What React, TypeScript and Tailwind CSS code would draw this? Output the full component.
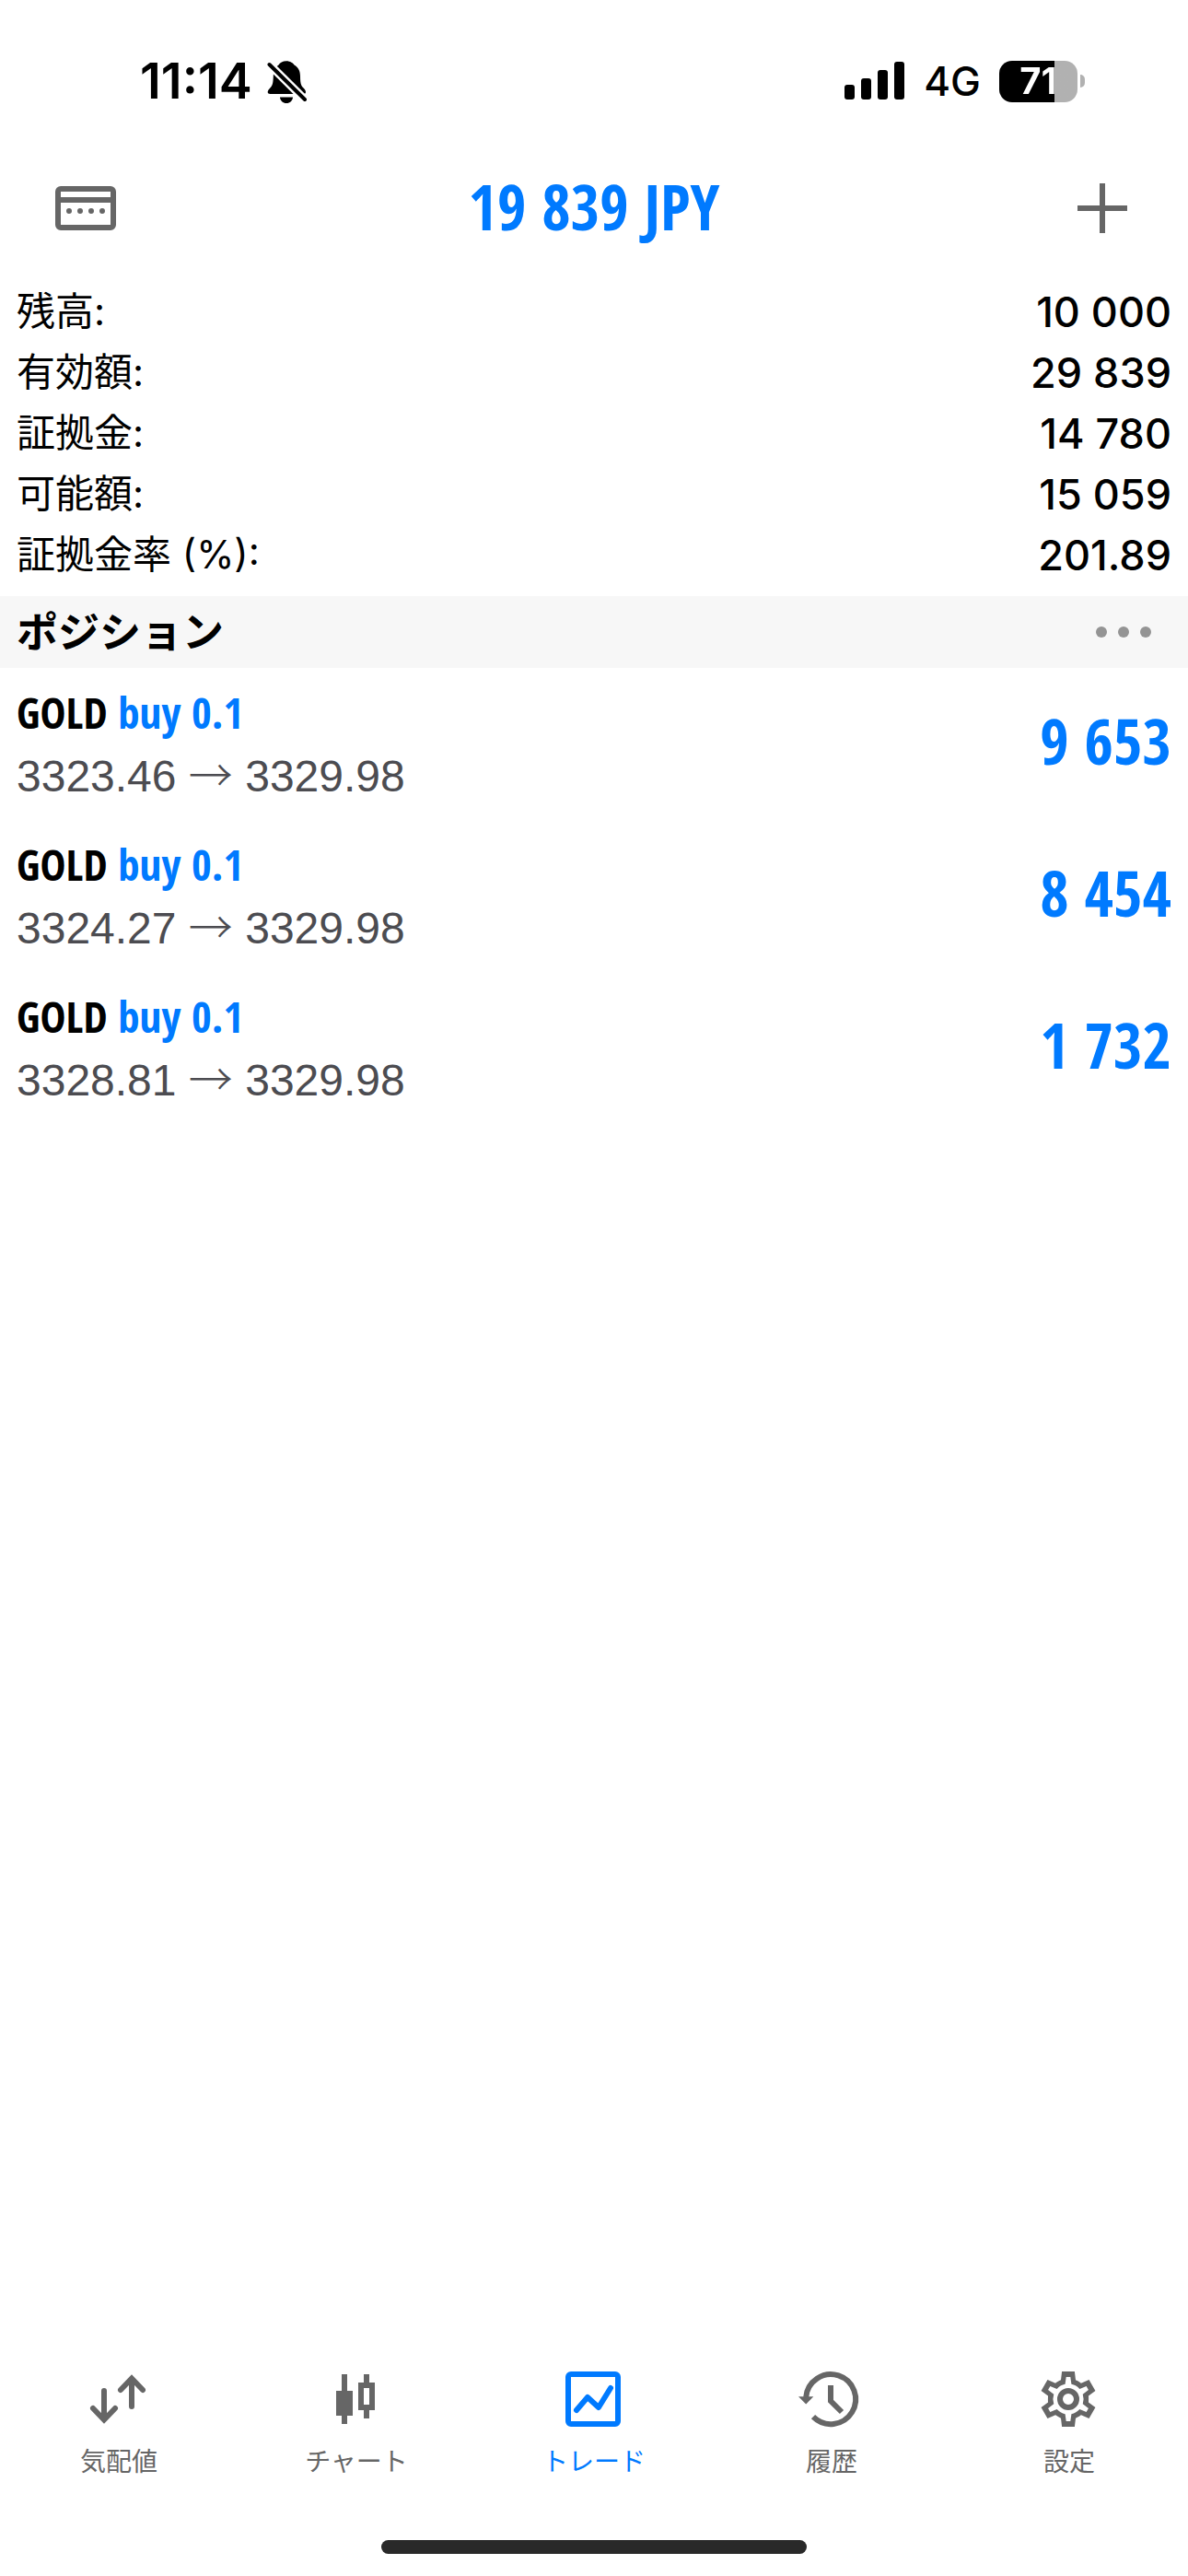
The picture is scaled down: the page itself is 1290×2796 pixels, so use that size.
import type { ReactNode } from "react"
import clsx from "clsx"

const account = [
  { label: "残高:", value: "10 000" },
  { label: "有効額:", value: "29 839" },
  { label: "証拠金:", value: "14 780" },
  { label: "可能額:", value: "15 059" },
  { label: "証拠金率 (%):", value: "201.89" },
]

const positions = [
  { symbol: "GOLD", side: "buy 0.1", open: "3323.46", current: "3329.98", profit: "9 653" },
  { symbol: "GOLD", side: "buy 0.1", open: "3324.27", current: "3329.98", profit: "8 454" },
  { symbol: "GOLD", side: "buy 0.1", open: "3328.81", current: "3329.98", profit: "1 732" },
]

// one gear tooth, repeated six times around the centre
function rotate(x: number, y: number, step: number) {
  const a = (step * Math.PI) / 3
  const rx = x * Math.cos(a) - y * Math.sin(a) + 35
  const ry = x * Math.sin(a) + y * Math.cos(a) + 36
  return `${rx.toFixed(2)} ${ry.toFixed(2)}`
}

const steps = [0, 1, 2, 3, 4, 5]

const gearPath =
  steps
    .map((s) => `${s ? "L" : "M"}${rotate(-8, -20.7, s)}L${rotate(-6.9, -30, s)}L${rotate(6.9, -30, s)}L${rotate(8, -20.7, s)}Q${rotate(9.5, -20.2, s)} ${rotate(13.9, -17.3, s)}`)
    .join("") +
  "Z" +
  steps
    .map((s) => `${s ? "A16.5 16.5 0 0 1 " : "M"}${rotate(-3.4, -16.2, s)}L${rotate(-2.3, -24, s)}L${rotate(2.3, -24, s)}L${rotate(3.4, -16.2, s)}`)
    .join("") +
  `A16.5 16.5 0 0 1 ${rotate(-3.4, -16.2, 0)}Z`

function TabIcon({ children }: { children: ReactNode }) {
  return (
    <svg viewBox="0 0 72 72" className="h-18 w-18" fill="none" stroke="currentColor" strokeWidth="6" aria-hidden="true">
      {children}
    </svg>
  )
}

const tabs = [
  {
    label: "気配値",
    icon: (
      <TabIcon>
        <path d="M20 27V58M8 46L20 58.5L32 46M50 44V14M38 26L50 13.5L62 26" strokeLinecap="round" />
      </TabIcon>
    ),
  },
  {
    label: "チャート",
    icon: (
      <TabIcon>
        <path
          d="M20 9h6v18h6v27h-6v9h-6v-9h-6V27h6zM44 9h6v9h6v30h-6v9h-6v-9h-6V18h6zM44 24v18h6V24z"
          fill="currentColor"
          fillRule="evenodd"
          stroke="none"
        />
      </TabIcon>
    ),
  },
  {
    label: "トレード",
    active: true,
    icon: (
      <TabIcon>
        <rect x="8" y="9" width="54" height="54" rx="3" />
        <path d="M17 48L29 34L41 45L54 24" strokeLinecap="round" strokeLinejoin="round" />
      </TabIcon>
    ),
  },
  {
    label: "履歴",
    icon: (
      <TabIcon>
        <path d="M8.2 34A27 27 0 1 1 16 55.2M35 21V38L47 50" />
        <path d="M0 33.3H16.3L8.2 41.5Z" fill="currentColor" stroke="none" />
      </TabIcon>
    ),
  },
  {
    label: "設定",
    icon: (
      <TabIcon>
        <path d={gearPath} fill="currentColor" fillRule="evenodd" stroke="none" />
        <circle cx="35" cy="36" r="9" />
      </TabIcon>
    ),
  },
]

function StatusBar() {
  return (
    <div className="flex h-44 items-center justify-between pr-28 pl-38 font-[Inter,sans-serif]">
      <div className="flex items-center gap-4">
        <span className="text-[54px] leading-none font-semibold">11:14</span>
        <svg viewBox="0 0 44 50" className="h-[50px] w-11" aria-label="消音">
          <path
            d="M21 3.3C25 3.3 28.5 5.6 29.5 7.5C34 10 36 14 36 20C36 29 37.5 30.5 40 33C42.5 35.5 43 39 39.5 39H3.5C0 39 .2 36 2 34C6 30 6.5 28 6.8 20C7 14 9 10 12.5 7.5C14 5 17 3.3 21 3.3Z"
            fill="black"
          />
          <path d="M14 42.5H28C27.5 46.5 25 49 21 49S14.5 46.5 14 42.5Z" fill="black" />
          <path d="M2.5 7L41 45" stroke="white" strokeWidth="9" />
          <path d="M2.5 7L41 45" stroke="black" strokeWidth="4" strokeLinecap="round" />
        </svg>
      </div>
      <div className="flex items-center gap-5">
        <svg viewBox="0 0 66 42" className="h-[42px] w-[66px]" aria-label="電波強度">
          <rect x="0" y="25" width="11" height="16" rx="3" />
          <rect x="18" y="18" width="11" height="23" rx="3" />
          <rect x="36" y="9" width="11" height="32" rx="3" />
          <rect x="54" y="0" width="11" height="41" rx="3" />
        </svg>
        <span className="text-[44px] leading-none font-medium">4G</span>
        <div className="flex items-center gap-[3px]">
          <div className="flex h-[45px] w-[85px] items-center justify-center rounded-[14px] bg-linear-to-r from-black from-71% to-[#b1b1b1] to-71% text-[40px] leading-none font-bold text-white">
            <span className="bg-linear-to-r from-white from-90% to-[#b1b1b1] to-90% bg-clip-text text-transparent">
              71
            </span>
          </div>
          <div className="h-3.5 w-[5px] rounded-r-full bg-[#b1b1b1]" />
        </div>
      </div>
    </div>
  )
}

function Header() {
  return (
    <header className="flex h-[100px] items-center justify-between px-[60px] text-[#666666]">
      <button type="button" aria-label="口座">
        <svg viewBox="0 0 66 48" className="h-12 w-[66px]" fill="none" stroke="currentColor" strokeWidth="6">
          <rect x="3" y="3" width="60" height="42" rx="3" />
          <path d="M3 15H63" />
          <path d="M15 27h0M27 27h0M39 27h0M51 27h0" strokeLinecap="round" />
        </svg>
      </button>
      <h1 className="pb-1 font-['Open_Sans_Condensed','Roboto_Condensed',sans-serif] text-[68px] leading-none font-bold text-[#007aff]">
        19 839 JPY
      </h1>
      <button type="button" aria-label="新規注文" className="flex w-[66px] justify-center">
        <svg viewBox="0 0 54 54" className="h-[54px] w-[54px]" stroke="currentColor" strokeWidth="6">
          <path d="M27 0V54M0 27H54" />
        </svg>
      </button>
    </header>
  )
}

export default function App() {
  return (
    <div className="flex min-h-screen flex-col bg-white font-[Inter,'Noto_Sans_CJK_JP',sans-serif] text-black" lang="ja">
      <StatusBar />
      <Header />

      <main className="flex-1 pt-[29px]">
        <dl className="px-[18px] pb-3">
          {account.map((row) => (
            <div key={row.label} className="flex h-[66px] items-center justify-between">
              <dt className="text-[42px] leading-none">{row.label}</dt>
              <dd className="text-[45px] leading-none font-medium">{row.value}</dd>
            </div>
          ))}
        </dl>

        <section>
          <div className="flex h-[78px] items-center justify-between bg-[#f7f7f7] pr-10 pl-[18px]">
            <h2 className="text-[45px] leading-none font-bold">ポジション</h2>
            <button type="button" aria-label="メニュー" className="flex gap-3">
              <span className="size-3 rounded-full bg-[#949494]" />
              <span className="size-3 rounded-full bg-[#949494]" />
              <span className="size-3 rounded-full bg-[#949494]" />
            </button>
          </div>
          <ul>
            {positions.map((p) => (
              <li key={p.open} className="flex h-[165px] items-center justify-between px-[18px]">
                <div>
                  <p className="font-['Open_Sans_Condensed','Roboto_Condensed',sans-serif] text-[47px] leading-[65px] font-bold">
                    {p.symbol} <span className="text-[#007aff]">{p.side}</span>
                  </p>
                  <p className="font-['Liberation_Sans',sans-serif] text-[48px] leading-[65px] text-[#4c4c51]">
                    {p.open} <span className="font-['Noto_Sans_CJK_JP',sans-serif] font-light">→</span> {p.current}
                  </p>
                </div>
                <span className="pb-2 font-['Open_Sans_Condensed','Roboto_Condensed',sans-serif] text-[68px] leading-none font-bold text-[#007aff]">
                  {p.profit}
                </span>
              </li>
            ))}
          </ul>
        </section>
      </main>

      <nav className="grid grid-cols-5">
        {tabs.map((tab) => (
          <a
            key={tab.label}
            href="#"
            aria-current={tab.active ? "page" : undefined}
            className={clsx("flex flex-col items-center gap-4", tab.active ? "text-[#007aff]" : "text-[#666666]")}
          >
            {tab.icon}
            <span className="font-['Noto_Sans_CJK_JP',sans-serif] text-[28px] leading-none">{tab.label}</span>
          </a>
        ))}
      </nav>
      <div className="flex justify-center pt-[73px] pb-6">
        <div className="h-[15px] w-[462px] rounded-full bg-[#292929]" />
      </div>
    </div>
  )
}
